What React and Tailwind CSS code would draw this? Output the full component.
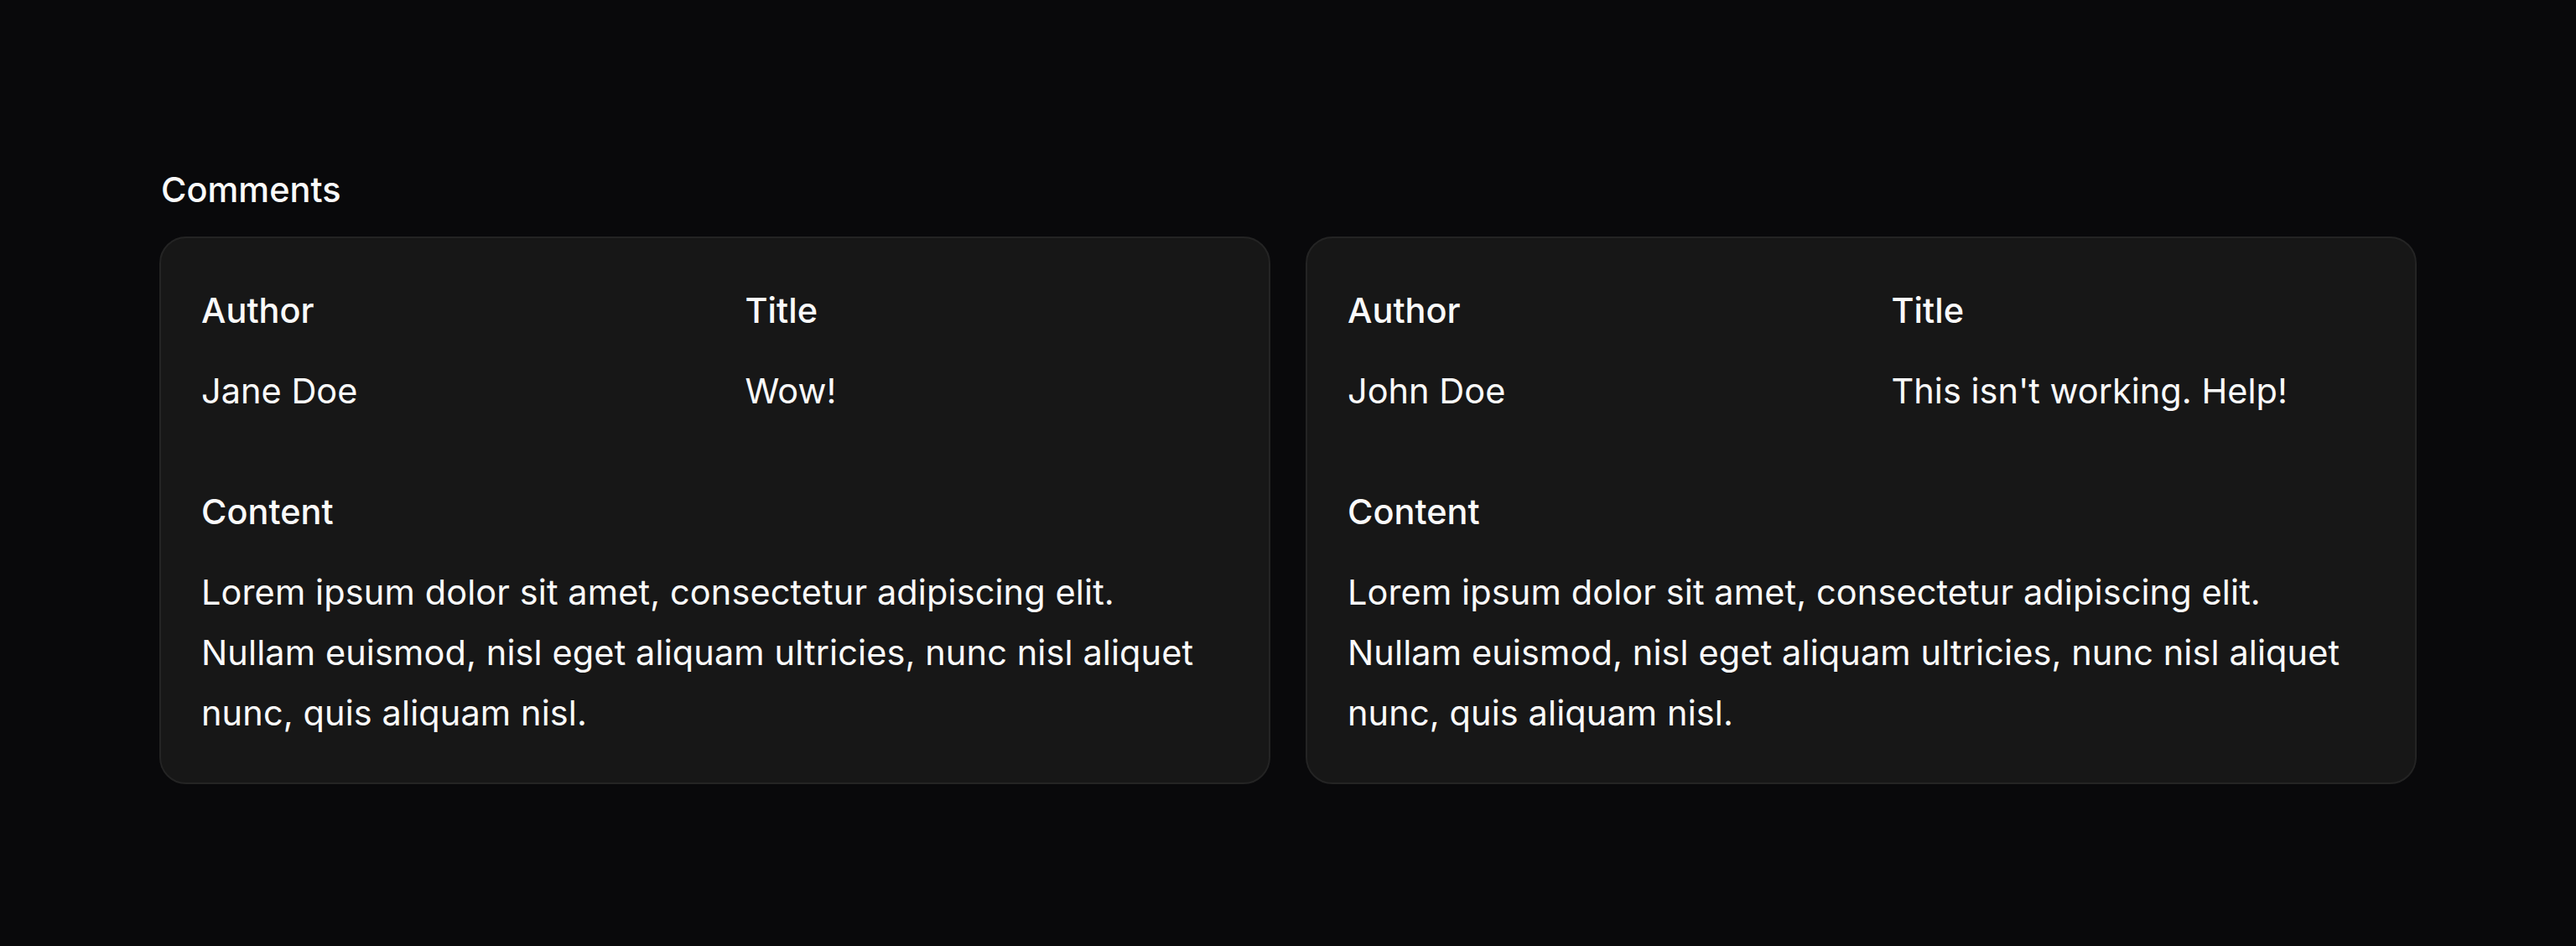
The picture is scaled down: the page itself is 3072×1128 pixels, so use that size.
import React from 'react';

const comments = [
  {
    author: 'Jane Doe',
    title: 'Wow!',
    content:
      'Lorem ipsum dolor sit amet, consectetur adipiscing elit. Nullam euismod, nisl eget aliquam ultricies, nunc nisl aliquet nunc, quis aliquam nisl.',
  },
  {
    author: 'John Doe',
    title: "This isn't working. Help!",
    content:
      'Lorem ipsum dolor sit amet, consectetur adipiscing elit. Nullam euismod, nisl eget aliquam ultricies, nunc nisl aliquet nunc, quis aliquam nisl.',
  },
];

const Label = ({ children }) => (
  <p className="font-medium text-[#fafafa] mb-6">{children}</p>
);

const CommentCard = ({ author, title, content }) => (
  <div className="bg-[#171717] border-2 border-[#242424] rounded-[32px] px-12 pt-[50px] pb-[47px]">
    <div className="grid grid-cols-2 gap-x-[72px]">
      <div>
        <Label>Author</Label>
        <p className="text-[#fafafa]">{author}</p>
      </div>
      <div>
        <Label>Title</Label>
        <p className="text-[#fafafa]">{title}</p>
      </div>
    </div>
    <div className="mt-[72px]">
      <Label>Content</Label>
      <p className="text-[#fafafa] tracking-[0.1px]">{content}</p>
    </div>
  </div>
);

export default function App() {
  return (
    <div
      className="min-h-screen bg-[#09090b] px-[190px] pt-[190px] text-[41.5px] leading-[72px]"
      style={{ fontFamily: 'Inter, "Noto Sans", sans-serif' }}
    >
      <h2 className="font-medium text-[#fafafa] mb-5 pl-[2px]">Comments</h2>
      <div className="grid grid-cols-2 gap-[42px]">
        {comments.map((c) => (
          <CommentCard key={c.author} {...c} />
        ))}
      </div>
    </div>
  );
}
